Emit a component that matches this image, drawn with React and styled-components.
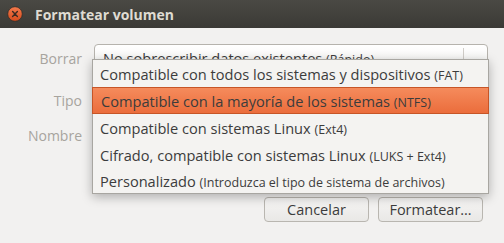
import React from 'react';
import styled, { createGlobalStyle } from 'styled-components';

const GlobalStyle = createGlobalStyle`
    html, body {
        margin: 0;
        padding: 0;
        background: #f2f1f0;
    }
    body {
        font-family: "Open Sans", "DejaVu Sans", sans-serif;
    }
`;

const Window = styled.div`
    width: 504px;
    height: 243px;
    background: #f2f1f0;
    display: flex;
    flex-direction: column;
    overflow: hidden;
`;

const TitleBar = styled.div`
    height: 28px;
    flex: none;
    display: flex;
    align-items: center;
    gap: 12px;
    padding-left: 7px;
    background: linear-gradient(#4a4944, #3b3a36);
`;

const Title = styled.div`
    color: #dfdbd2;
    font-size: 14px;
    font-weight: bold;
`;

const Body = styled.div`
    flex: 1;
    display: flex;
    flex-direction: column;
    padding: 16px 21px 0 0;
`;

const Form = styled.div`
    display: grid;
    grid-template-columns: 82px 1fr;
    grid-template-rows: 28px 28px 28px;
    row-gap: 16px;
    column-gap: 12px;
    align-items: center;
`;

const Label = styled.div`
    text-align: right;
    color: #a7a49e;
    font-size: 14px;
    transform: translateY(${p => p.shift || 0}px);
`;

const Combo = styled.div`
    position: relative;
    height: 28px;
    box-sizing: border-box;
    width: 394px;
    border: 1px solid #b6b3ad;
    border-radius: 4px;
    background: linear-gradient(#ffffff, #f1f0ee);
    display: flex;
    align-items: center;
    padding-left: 8px;
    color: #3c3c3c;
    font-size: 14.6px;
`;

const Text = styled.span`
    white-space: nowrap;
`;

const Small = styled.span`
    font-size: 12.5px;
`;

const ArrowBox = styled.div`
    margin-left: auto;
    width: 23px;
    height: 14px;
    border-left: 1px solid #d0cdc8;
    display: flex;
    align-items: center;
    justify-content: center;
    align-self: flex-start;
    margin-top: 3px;
    padding-top: 6px;
`;

const Arrow = styled.div`
    width: 0;
    height: 0;
    border-left: 4px solid transparent;
    border-right: 4px solid transparent;
    border-top: 4px solid #3c3c3c;
`;

const Menu = styled.div`
    position: absolute;
    left: -3px;
    top: 14px;
    width: 397px;
    box-sizing: border-box;
    background: #f4f3f1;
    border: 1px solid #a8a6a1;
    box-shadow: 0 3px 10px rgba(0, 0, 0, 0.28);
    display: flex;
    flex-direction: column;
    z-index: 2;
`;

const Item = styled.div`
    height: ${p => p.h || 27}px;
    box-sizing: border-box;
    display: flex;
    align-items: center;
    font-size: 14.6px;
    color: #3c3c3c;
    margin: ${p => (p.active ? '0 -1px' : '0')};
    padding-left: ${p => (p.active ? '8px' : '7px')};
    background: ${p => (p.active ? 'linear-gradient(#f58b5c, #eb6d3c)' : 'transparent')};
    border: ${p => (p.active ? '1px solid #c65527' : 'none')};
`;

const Footer = styled.div`
    margin-top: auto;
    margin-bottom: 21px;
    display: flex;
    justify-content: flex-end;
    gap: 9px;
`;

const Button = styled.button`
    width: 105px;
    height: 25px;
    box-sizing: border-box;
    border: 1px solid #b9b6b0;
    border-radius: 4px;
    background: linear-gradient(#f6f5f4, #e9e8e6);
    font-family: inherit;
    font-size: 14.5px;
    color: #3c3c3c;
    padding: 0;
`;

const CloseButton = () => (
    <svg width="16" height="16" viewBox="0 0 16 16">
        <defs>
            <linearGradient id="cg" x1="0" y1="0" x2="0" y2="1">
                <stop offset="0" stopColor="#f47a4c" />
                <stop offset="1" stopColor="#d64b1c" />
            </linearGradient>
        </defs>
        <circle cx="8" cy="8" r="7.3" fill="url(#cg)" stroke="#2e2d2a" strokeWidth="0.8" />
        <path d="M5.6 5.6 L10.4 10.4 M10.4 5.6 L5.6 10.4" stroke="#3b2a22" strokeWidth="1.4" strokeLinecap="round" />
    </svg>
);

const options = [
    { main: 'Compatible con todos los sistemas y dispositivos', note: '(FAT)' },
    { main: 'Compatible con la mayoría de los sistemas', note: '(NTFS)', active: true },
    { main: 'Compatible con sistemas Linux', note: '(Ext4)' },
    { main: 'Cifrado, compatible con sistemas Linux', note: '(LUKS + Ext4)' },
    { main: 'Personalizado', note: '(Introduzca el tipo de sistema de archivos)', h: 25 },
];

export default function App() {
    return (
        <Window>
            <GlobalStyle />
            <TitleBar>
                <CloseButton />
                <Title>Formatear volumen</Title>
            </TitleBar>
            <Body>
                <Form>
                    <Label>Borrar</Label>
                    <Combo>
                        <Text>
                            No sobrescribir datos existentes <Small>(Rápido)</Small>
                        </Text>
                        <ArrowBox>
                            <Arrow />
                        </ArrowBox>
                        <Menu>
                            {options.map(o => (
                                <Item key={o.main} active={o.active} h={o.h}>
                                    <Text>
                                        {o.main} <Small>{o.note}</Small>
                                    </Text>
                                </Item>
                            ))}
                        </Menu>
                    </Combo>
                    <Label shift={-2}>Tipo</Label>
                    <Combo />
                    <Label shift={-11}>Nombre</Label>
                    <Combo />
                </Form>
                <Footer>
                    <Button>Cancelar</Button>
                    <Button>Formatear…</Button>
                </Footer>
            </Body>
        </Window>
    );
}
